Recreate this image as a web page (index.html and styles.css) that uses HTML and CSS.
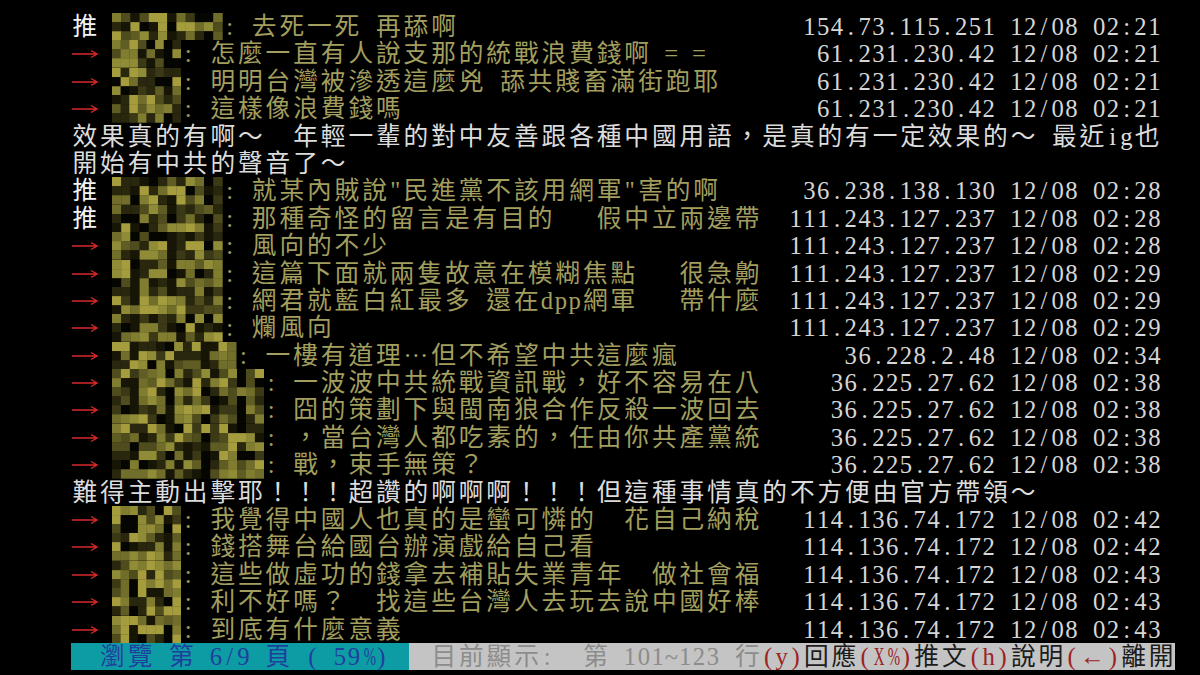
FILE: index.html
```html
<!DOCTYPE html>
<html lang="zh-Hant">
<head>
    <meta charset="UTF-8">
    <meta name="viewport" content="width=device-width, initial-scale=1.0">
    <title>PTT 推文</title>
    <link rel="stylesheet" href="styles.css">
</head>
<body>
    <div id="term" class="term"></div>

    <script>
        // one entry per terminal line (80 columns x 24 rows)
        const rows = [
            { tag: 'push', id: 8, text: '去死一死 再舔啊', ip: '154.73.115.251 12/08 02:21' },
            { tag: 'arrow', id: 5, text: '怎麼一直有人說支那的統戰浪費錢啊 = =', ip: '61.231.230.42 12/08 02:21' },
            { tag: 'arrow', id: 5, text: '明明台灣被滲透這麼兇 舔共賤畜滿街跑耶', ip: '61.231.230.42 12/08 02:21' },
            { tag: 'arrow', id: 5, text: '這樣像浪費錢嗎', ip: '61.231.230.42 12/08 02:21' },
            { line: '效果真的有啊～  年輕一輩的對中友善跟各種中國用語，是真的有一定效果的～ 最近ig也' },
            { line: '開始有中共的聲音了～' },
            { tag: 'push', id: 8, text: '就某內賊說"民進黨不該用網軍"害的啊', ip: '36.238.138.130 12/08 02:28' },
            { tag: 'push', id: 8, text: '那種奇怪的留言是有目的   假中立兩邊帶', ip: '111.243.127.237 12/08 02:28' },
            { tag: 'arrow', id: 8, text: '風向的不少', ip: '111.243.127.237 12/08 02:28' },
            { tag: 'arrow', id: 8, text: '這篇下面就兩隻故意在模糊焦點   很急齁', ip: '111.243.127.237 12/08 02:29' },
            { tag: 'arrow', id: 8, text: '網君就藍白紅最多 還在dpp網軍   帶什麼', ip: '111.243.127.237 12/08 02:29' },
            { tag: 'arrow', id: 8, text: '爛風向', ip: '111.243.127.237 12/08 02:29' },
            { tag: 'arrow', id: 9, text: '一樓有道理…但不希望中共這麼瘋', ip: '36.228.2.48 12/08 02:34' },
            { tag: 'arrow', id: 11, text: '一波波中共統戰資訊戰，好不容易在八', ip: '36.225.27.62 12/08 02:38' },
            { tag: 'arrow', id: 11, text: '囧的策劃下與閩南狼合作反殺一波回去', ip: '36.225.27.62 12/08 02:38' },
            { tag: 'arrow', id: 11, text: '，當台灣人都吃素的，任由你共產黨統', ip: '36.225.27.62 12/08 02:38' },
            { tag: 'arrow', id: 11, text: '戰，束手無策？', ip: '36.225.27.62 12/08 02:38' },
            { line: '難得主動出擊耶！！！超讚的啊啊啊！！！但這種事情真的不方便由官方帶領～' },
            { tag: 'arrow', id: 5, text: '我覺得中國人也真的是蠻可憐的  花自己納稅', ip: '114.136.74.172 12/08 02:42' },
            { tag: 'arrow', id: 5, text: '錢搭舞台給國台辦演戲給自己看', ip: '114.136.74.172 12/08 02:42' },
            { tag: 'arrow', id: 5, text: '這些做虛功的錢拿去補貼失業青年  做社會福', ip: '114.136.74.172 12/08 02:43' },
            { tag: 'arrow', id: 5, text: '利不好嗎？  找這些台灣人去玩去說中國好棒', ip: '114.136.74.172 12/08 02:43' },
            { tag: 'arrow', id: 5, text: '到底有什麼意義', ip: '114.136.74.172 12/08 02:43' }
        ];

        const footer = [
            ['目前顯示:  第 101~123 行', 'dim'],
            ['(y)', 'key'], ['回應', 'act'],
            ['(X%)', 'key'], ['推文', 'act'],
            ['(h)', 'key'], ['說明', 'act'],
            ['(←)', 'key'], ['離開', 'act']
        ];

        const COL = 13.8;
        const ROW = 27.4;
        const palette = ['#050501', '#171606', '#29270e', '#3c3a16', '#4f4d1d', '#605d24', '#716d2a', '#807c30', '#908b36', '#a59c3e'];
        let seed = 11;

        function rand() {
            seed = (seed * 1103515245 + 12345) % 2147483648;
            return seed / 2147483648;
        }

        // every character sits in its own terminal cell
        function cells(str, cls) {
            const frag = document.createDocumentFragment();
            for (const ch of str) {
                const s = document.createElement('span');
                let name = ch.charCodeAt(0) < 128 ? 'h' : 'w';
                if (ch === '%' || ch === 'X') name += ' narrow';
                if (ch === '…') name += ' mid';
                s.className = name + (cls ? ' ' + cls : '');
                s.textContent = ch;
                frag.appendChild(s);
            }
            return frag;
        }

        function arrowCell() {
            const s = document.createElement('span');
            s.className = 'w arrow';
            s.innerHTML = '<svg width="28" height="28" viewBox="0 0 28 28">' +
                '<path d="M1 14 H26 M20 10.5 L26 14 L20 17.5" fill="none" stroke="#d8282a" stroke-width="1.4"/></svg>';
            return s;
        }

        // censored user id, drawn as a pixel mosaic
        function mosaic(n) {
            const w = n * COL;
            const cols = Math.round(n * 1.5);
            const bw = w / cols;
            const bh = ROW / 3;
            let rects = '';
            for (let y = 0; y < 3; y++) {
                for (let x = 0; x < cols; x++) {
                    let k = 2 + Math.floor(rand() * (palette.length - 2));
                    if (rand() < 0.22) k = Math.floor(rand() * 3);
                    if (x % 4 === 2 && rand() < 0.5) k = Math.floor(rand() * 2);
                    if (rand() < 0.06) k = palette.length - 1;
                    rects += `<rect x="${(x * bw).toFixed(2)}" y="${(y * bh).toFixed(2)}" width="${(bw + 0.3).toFixed(2)}" height="${(bh + 0.3).toFixed(2)}" fill="${palette[k]}"/>`;
                }
            }
            const s = document.createElement('span');
            s.className = 'mosaic';
            s.innerHTML = `<svg width="${w}" height="${ROW}">${rects}</svg>`;
            return s;
        }

        const term = document.getElementById('term');

        rows.forEach(r => {
            const row = document.createElement('div');
            row.className = 'row';
            if (r.line) {
                row.appendChild(cells(r.line, 'txt'));
            } else {
                row.appendChild(r.tag === 'push' ? cells('推', 'push') : arrowCell());
                row.appendChild(cells(' '));
                row.appendChild(mosaic(r.id));
                row.appendChild(cells(': ' + r.text, 'msg'));
                const fill = document.createElement('span');
                fill.className = 'fill';
                row.appendChild(fill);
                row.appendChild(cells(r.ip + ' ', 'ip'));
            }
            term.appendChild(row);
        });

        const bar = document.createElement('div');
        bar.className = 'row bar';
        const left = document.createElement('div');
        left.className = 'bar-left';
        left.appendChild(cells('  瀏覽 第 6/9 頁 ( 59%)'));
        const right = document.createElement('div');
        right.className = 'bar-right';
        footer.forEach(([t, cls]) => right.appendChild(cells(t, cls)));
        bar.appendChild(left);
        bar.appendChild(right);
        term.appendChild(bar);
    </script>
</body>
</html>
```

FILE: styles.css
```css
body {
    margin: 0;
    background: #000;
    height: 675px;
    overflow: hidden;
}
.term {
    padding: 13px 0 0 71px;
    font-family: "Liberation Serif", "Noto Sans CJK TC", serif;
    font-size: 24.7px;
    line-height: 27.4px;
    color: #d0d0d0;
}
.row {
    display: flex;
    width: 1104px;
    height: 27.4px;
    white-space: pre;
}
.h,
.w {
    display: inline-block;
    text-align: center;
    height: 27.4px;
}
.h {
    width: 13.8px;
}
.w {
    width: 27.6px;
}
.narrow {
    transform: scaleX(0.6);
}
.mid {
    transform: translateY(-7px);
}
.arrow svg {
    display: block;
}
.mosaic svg {
    display: block;
}
.fill {
    flex: 1;
}
.push {
    color: #f4f4f4;
}
.msg {
    color: #a29e5e;
}
.ip {
    color: #d6d6d6;
}
.txt {
    color: #dcdcdc;
}
.bar {
    background: #c4c4c4;
}
.bar-left {
    display: flex;
    width: 338px;
    background: #0e9ca4;
    color: #1f3f9e;
}
.bar-right {
    display: flex;
    flex: 1;
    justify-content: flex-end;
}
.dim {
    color: #8c8c8c;
}
.key {
    color: #9c2222;
}
.act {
    color: #1c1c1c;
}
```
